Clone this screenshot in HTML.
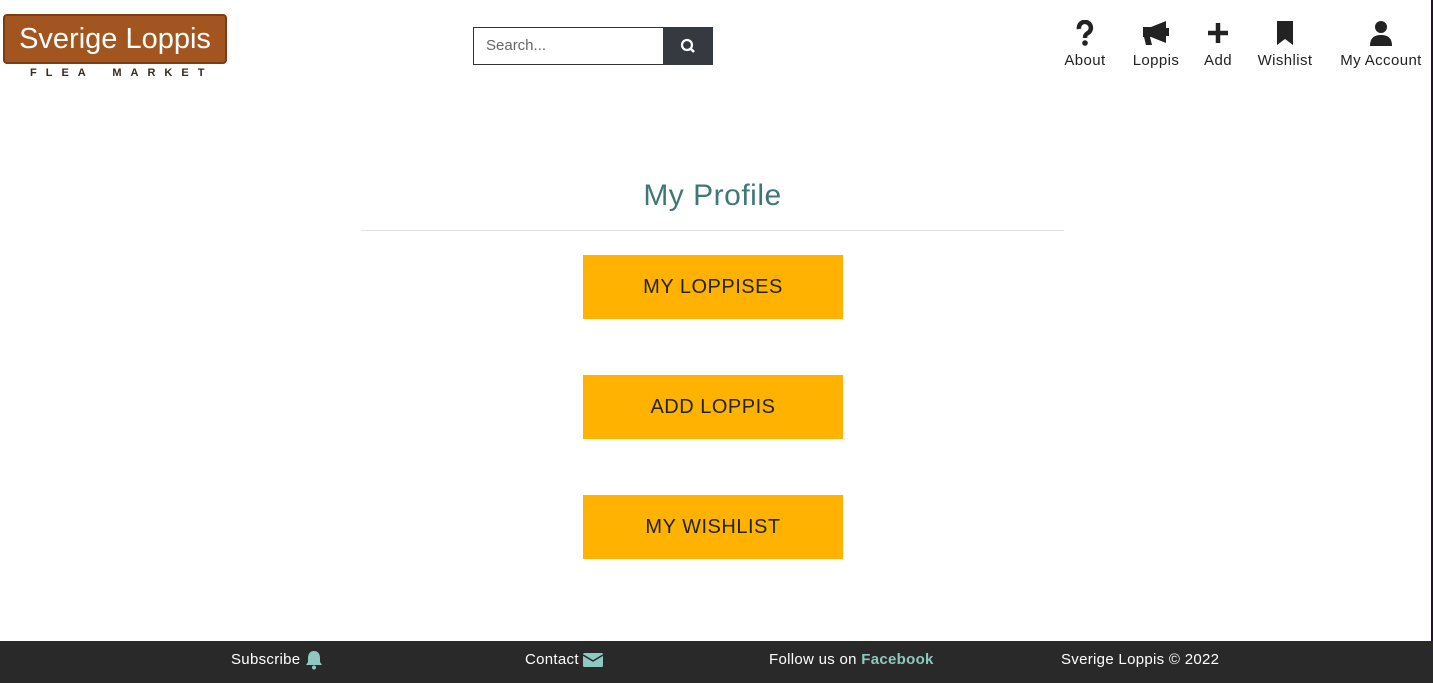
<!DOCTYPE html>
<html><head><meta charset="utf-8"><style>
*{margin:0;padding:0;box-sizing:border-box}
body{width:1433px;height:683px;position:relative;background:#fff;font-family:"Liberation Sans",sans-serif;overflow:hidden;color:#222}
.abs{position:absolute}
.board{left:3px;top:14px;width:224px;height:50px;background:#a3551f;border-radius:4px;border:2px solid #7a3d14;color:#fff;font-family:"Liberation Sans",sans-serif;font-size:29px;text-align:center;line-height:46px;white-space:nowrap}
.flea{left:30px;top:66px;width:200px;font-size:11px;letter-spacing:9px;word-spacing:6px;color:#3a2a20;font-family:"Liberation Sans",sans-serif;white-space:nowrap;line-height:14px;font-weight:bold}
.search{left:473px;top:27px;width:191px;height:38px;border:1px solid #333;font-size:15px;color:#666;padding:9px 12px;line-height:18px}
.sbtn{left:663px;top:27px;width:50px;height:38px;background:#343a40}
.nav{top:20px;text-align:center;font-size:15px;letter-spacing:.4px;color:#222;white-space:nowrap;line-height:18px}
.nav svg{display:block;margin:0 auto 6px;height:26px}
h1{position:absolute;left:0;width:1425px;top:177px;text-align:center;font-weight:normal;font-size:30px;letter-spacing:.5px;color:#3f7777;line-height:38px}
.hr{left:361px;top:230px;width:703px;height:1px;background:#e2e2e2}
.btn{left:583px;width:260px;height:64px;background:#ffb300;font-size:20px;letter-spacing:.5px;text-align:center;line-height:64px;color:#222}
.foot{left:0;top:641px;width:1433px;height:42px;background:#292929;color:#fff;font-size:15px;letter-spacing:.3px}
.foot span{position:absolute;top:9px;line-height:20px;white-space:nowrap}
.foot svg{vertical-align:middle}
.edge{left:1431px;top:0;width:2px;height:641px;background:#2a0d3a}
</style></head><body>
<div class="abs board">Sverige Loppis</div>
<div class="abs flea">FLEA MARKET</div>
<div class="abs search">Search...</div>
<div class="abs sbtn"><svg width="50" height="38" viewBox="0 0 50 38"><circle cx="24" cy="18" r="5" fill="none" stroke="#fff" stroke-width="2.2"/><line x1="27.5" y1="21.5" x2="31" y2="25" stroke="#fff" stroke-width="2.6"/></svg></div>
<div class="abs nav" style="left:1060px;width:50px"><svg viewBox="0 0 20 26" width="20"><path d="M4 9a6 6 0 1 1 9 4c-2 1-3 2-3 5" fill="none" stroke="#222" stroke-width="4.5"/><circle cx="10" cy="23" r="2.8" fill="#222"/></svg>About</div>
<div class="abs nav" style="left:1129px;width:54px"><svg viewBox="0 0 30 26" width="30"><path d="M2 7h8l15-6v22l-15-6H9l2 8H5l-2-8H2z" fill="#222"/><rect x="25" y="8" width="3" height="8" fill="#222"/></svg>Loppis</div>
<div class="abs nav" style="left:1199px;width:38px"><svg viewBox="0 0 24 26" width="24"><path d="M12 3v20M2 13h20" stroke="#222" stroke-width="4.5"/></svg>Add</div>
<div class="abs nav" style="left:1254px;width:62px"><svg viewBox="0 0 18 26" width="18"><path d="M1 1h16v24l-8-6-8 6z" fill="#222"/></svg>Wishlist</div>
<div class="abs nav" style="left:1335px;width:92px"><svg viewBox="0 0 24 26" width="24"><circle cx="12" cy="7" r="6" fill="#222"/><path d="M1 26c0-8 4-11 11-11s11 3 11 11z" fill="#222"/></svg>My Account</div>
<h1>My Profile</h1>
<div class="abs hr"></div>
<div class="abs btn" style="top:255px">MY LOPPISES</div>
<div class="abs btn" style="top:375px">ADD LOPPIS</div>
<div class="abs btn" style="top:495px">MY WISHLIST</div>
<div class="abs edge"></div>
<div class="abs foot">
<span style="left:231px">Subscribe <svg width="18" height="20" viewBox="0 0 18 20"><path d="M9 1c-4 0-6 3-6 7v4l-2 3h16l-2-3V8c0-4-2-7-6-7z" fill="#8fc8c0"/><circle cx="9" cy="17.5" r="2" fill="#8fc8c0"/></svg></span>
<span style="left:525px">Contact <svg width="20" height="16" viewBox="0 0 20 16"><rect x="0" y="1" width="20" height="14" rx="1.5" fill="#8fc8c0"/><path d="M0 3l10 6 10-6" fill="none" stroke="#292929" stroke-width="1.5"/></svg></span>
<span style="left:769px">Follow us on <b style="color:#8fc8c0">Facebook</b></span>
<span style="left:1061px">Sverige Loppis © 2022</span>
</div>
</body></html>
